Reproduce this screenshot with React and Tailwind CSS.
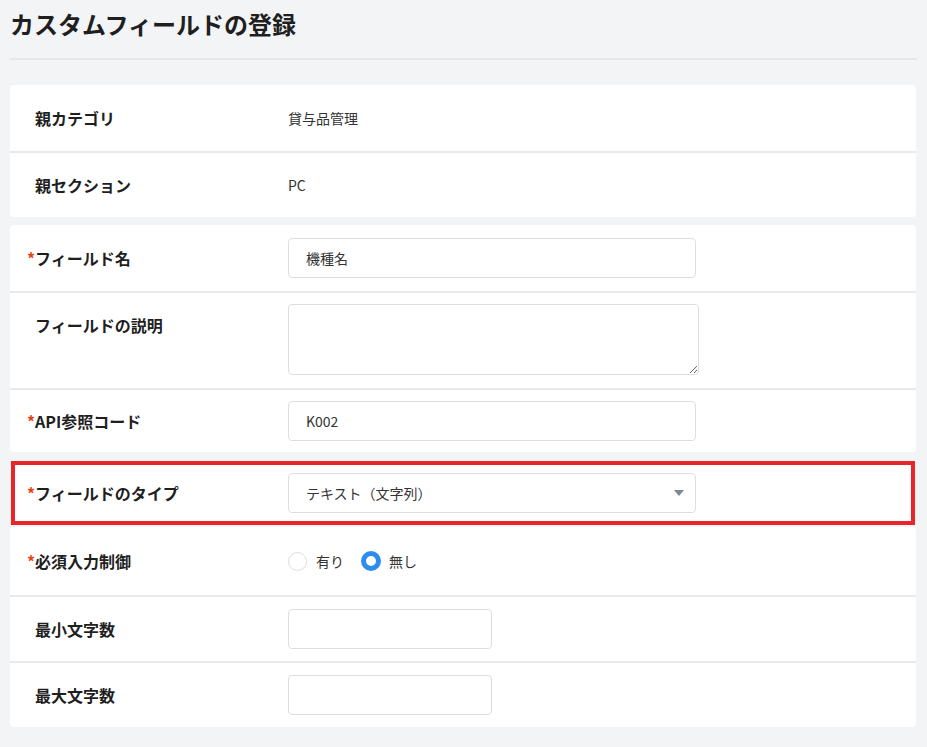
import React from "react";

const font = { fontFamily: '"Noto Sans CJK JP", "Noto Sans", sans-serif' };

function Label({ required, children, className = "" }) {
  return (
    <div className={`w-[278px] shrink-0 pl-[17px] text-base font-bold text-[#1f1f1f] ${className}`}>
      <span className="inline-block w-2 text-[#ed4014]">{required ? "*" : ""}</span>
      {children}
    </div>
  );
}

function Row({ first, required, label, children, top, h = "h-[66px]" }) {
  return (
    <div
      className={`flex ${top ? "items-start pt-[11px]" : "items-center"} ${h} ${
        first ? "" : "border-t-2 border-[#e8eaec]"
      }`}
    >
      <Label required={required} className={top ? "mt-[9px]" : ""}>
        {label}
      </Label>
      <div className="text-sm text-[#333]">{children}</div>
    </div>
  );
}

function Input({ w = "w-[408px]", value }) {
  return (
    <div
      className={`${w} h-10 rounded border border-[#dcdee2] bg-white pl-[17px] flex items-center text-sm text-[#333]`}
    >
      {value}
    </div>
  );
}

export default function App() {
  return (
    <div className="min-h-screen bg-[#f3f4f6] px-[10px]" style={font}>
      <div className="h-[60px] pt-[8px] border-b-2 border-[#e4e6ea]">
        <h1 className="text-2xl font-bold text-[#1f1f1f]">カスタムフィールドの登録</h1>
      </div>

      <div className="mt-[25px] bg-white rounded-sm w-[906px]">
        <Row first label="親カテゴリ">貸与品管理</Row>
        <Row label="親セクション">PC</Row>
      </div>

      <div className="mt-[8px] bg-white rounded-sm w-[906px]">
        <Row first required label="フィールド名">
          <Input value="機種名" />
        </Row>
        <Row label="フィールドの説明" top h="h-[97px]">
          <textarea className="block w-[411px] h-[71px] rounded border border-[#dcdee2] bg-white outline-none" />
        </Row>
        <Row required label="API参照コード" h="h-[64px]">
          <Input value="K002" />
        </Row>
      </div>

      <div className="mt-[9px] ml-[1px] w-[904px] h-[64px] bg-white border-4 border-[#e8262a] flex items-center">
        <div className="w-[273px] shrink-0 pl-[12px] text-base font-bold text-[#1f1f1f]">
          <span className="inline-block w-2 text-[#ed4014]">*</span>
          フィールドのタイプ
        </div>
        <div className="w-[408px] h-10 rounded border border-[#dcdee2] bg-white pl-[17px] pr-[11px] flex items-center justify-between text-sm text-[#333]">
          <span>テキスト（文字列）</span>
          <svg width="10" height="6" viewBox="0 0 10 6">
            <path d="M0 0h10L5 6z" fill="#808695" />
          </svg>
        </div>
      </div>

      <div className="mt-[2px] bg-white rounded-sm w-[906px]">
        <Row first required label="必須入力制御" h="h-[68px]">
          <div className="flex items-center">
            <span className="w-[19px] h-[19px] rounded-full border border-[#dcdee2] bg-white" />
            <span className="ml-[9px]">有り</span>
            <span className="ml-[17px] w-[20px] h-[20px] rounded-full border-[5px] border-[#2d8cf0] bg-white" />
            <span className="ml-[8px]">無し</span>
          </div>
        </Row>
        <Row label="最小文字数">
          <Input w="w-[204px]" />
        </Row>
        <Row label="最大文字数">
          <Input w="w-[204px]" />
        </Row>
      </div>
    </div>
  );
}
